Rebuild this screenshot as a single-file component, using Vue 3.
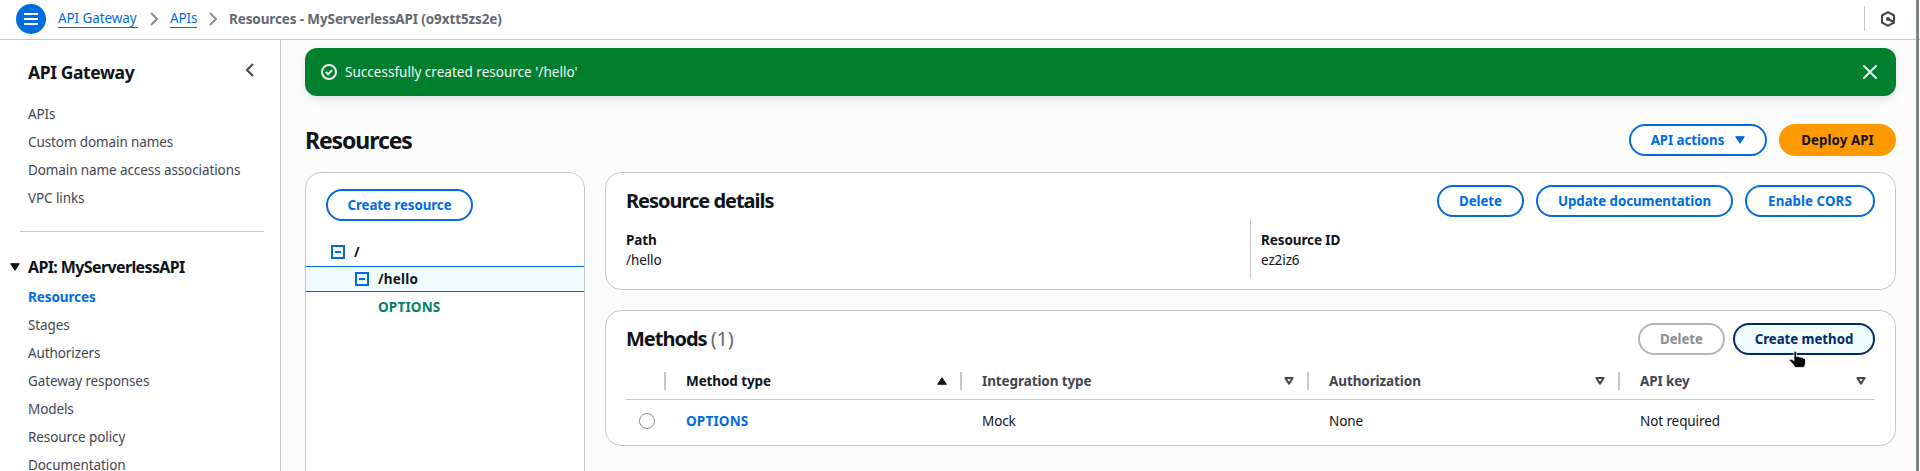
<script setup>
const topLinks = ['APIs', 'Custom domain names', 'Domain name access associations', 'VPC links']
const apiLinks = ['Resources', 'Stages', 'Authorizers', 'Gateway responses', 'Models', 'Resource policy', 'Documentation']
const columns = [
  { label: 'Method type', sorted: true },
  { label: 'Integration type' },
  { label: 'Authorization' },
  { label: 'API key' },
]
</script>

<template>
  <div class="page">
    <header class="topbar">
      <button class="menu" aria-label="Menu">
        <svg width="14" height="14" viewBox="0 0 14 14"><path d="M0 2h14M0 7h14M0 12h14" stroke="#fff" stroke-width="2" /></svg>
      </button>
      <nav class="crumbs">
        <a class="crumb c1">API Gateway</a>
        <svg class="sep" width="8" height="14" viewBox="0 0 8 14"><path d="M1 1l6 6-6 6" /></svg>
        <a class="crumb c2">APIs</a>
        <svg class="sep" width="8" height="14" viewBox="0 0 8 14"><path d="M1 1l6 6-6 6" /></svg>
        <span class="here">Resources - MyServerlessAPI (o9xtt5zs2e)</span>
      </nav>
      <div class="tools">
        <svg width="16" height="16" viewBox="0 0 16 16">
          <path d="M8 1.2l6 3.3v7l-6 3.3-6-3.3v-7z" fill="none" stroke="#424650" stroke-width="2" stroke-linejoin="round" />
          <path d="M8 8l6 3" stroke="#424650" stroke-width="2" /><circle cx="8" cy="8" r="2" fill="#424650" />
        </svg>
      </div>
    </header>

    <div class="body">
      <aside class="side">
        <div class="side-head">
          <h2>API Gateway</h2>
          <svg width="8" height="14" viewBox="0 0 8 14"><path d="M7 1L1 7l6 6" fill="none" stroke="#424650" stroke-width="2" /></svg>
        </div>
        <ul class="links">
          <li v-for="l in topLinks" :key="l">{{ l }}</li>
        </ul>
        <hr />
        <div class="group">
          <svg width="10" height="8" viewBox="0 0 10 8"><path d="M.7.7h8.6L5 7.3z" fill="#0f141a" stroke="#0f141a" stroke-linejoin="round" /></svg>
          <h3>API: MyServerlessAPI</h3>
        </div>
        <ul class="links api">
          <li v-for="(l, i) in apiLinks" :key="l" :class="{ active: i === 0 }">{{ l }}</li>
        </ul>
      </aside>

      <main class="main">
        <div class="flash">
          <svg width="16" height="16" viewBox="0 0 16 16" fill="none" stroke="#ebebf0" stroke-width="2"><circle cx="8" cy="8" r="7" /><path d="M4.8 8l2.3 2.3 4-4.2" /></svg>
          <span>Successfully created resource '/hello'</span>
          <svg class="close" width="14" height="14" viewBox="0 0 14 14"><path d="M1 1l12 12M13 1L1 13" stroke="#ebebf0" stroke-width="2" stroke-linecap="round" /></svg>
        </div>

        <div class="title-row">
          <h1>Resources</h1>
          <button class="btn w-actions">API actions
            <svg width="10" height="8" viewBox="0 0 10 8"><path d="M.7.7h8.6L5 7.3z" fill="#006ce0" stroke="#006ce0" stroke-linejoin="round" /></svg>
          </button>
          <button class="btn primary w-deploy">Deploy API</button>
        </div>

        <div class="columns">
          <section class="card tree">
            <button class="btn w-create">Create resource</button>
            <div class="nodes">
              <div class="node root">
                <svg width="14" height="14" viewBox="0 0 14 14"><path d="M1 1h12v12H1zM4 7h6" /></svg><span>/</span>
              </div>
              <div class="node selected">
                <svg width="14" height="14" viewBox="0 0 14 14"><path d="M1 1h12v12H1zM4 7h6" /></svg><span>/hello</span>
              </div>
              <div class="node method">OPTIONS</div>
            </div>
          </section>

          <div class="stack">
            <section class="card details">
              <div class="card-head">
                <h2 class="t-details">Resource details</h2>
                <button class="btn w-delete">Delete</button>
                <button class="btn w-update">Update documentation</button>
                <button class="btn w-cors">Enable CORS</button>
              </div>
              <dl class="pairs">
                <div><dt>Path</dt><dd>/hello</dd></div>
                <div><dt>Resource ID</dt><dd>ez2iz6</dd></div>
              </dl>
            </section>

            <section class="card methods">
              <div class="card-head">
                <h2>Methods <span>(1)</span></h2>
                <button class="btn disabled w-delete">Delete</button>
                <div class="hovered">
                  <button class="btn hover w-method">Create method</button>
                  <svg class="pointer" width="18" height="18" viewBox="0 0 18 18">
                    <path d="M5 1.4C5 0 7.4 0 7.4 1.4v4.4c.6-.8 2.3-.6 2.6.4.7-.6 2.2-.3 2.5.6.7-.5 2-.2 2.2.7.8-.2 1.8.2 1.8 1.2v3.2c0 1.8-1 2.6-1.3 4.5H5.9c-.8-2-2.4-3.4-3.6-4.9C1.200 10.300 0 9.800.6 8.800c.8-1 2.900-.5 4.400.9z" fill="#000" stroke="#fff" stroke-width=".8" />
                  </svg>
                </div>
              </div>
              <div class="grid head">
                <div class="cell pick"></div>
                <div v-for="c in columns" :key="c.label" class="cell" :class="{ sorted: c.sorted }">
                  <span>{{ c.label }}</span>
                  <svg width="10" height="8" viewBox="0 0 10 8">
                    <path v-if="c.sorted" d="M.7 7.3h8.6L5 .7z" fill="#0f141a" stroke="#0f141a" stroke-linejoin="round" />
                    <path v-else d="M1.4 1h7.2L5 6.6z" fill="none" stroke="#424650" stroke-width="2" stroke-linejoin="round" />
                  </svg>
                </div>
              </div>
              <div class="grid row">
                <div class="cell pick"><i class="radio"></i></div>
                <div class="cell link">OPTIONS</div>
                <div class="cell">Mock</div>
                <div class="cell">None</div>
                <div class="cell">Not required</div>
              </div>
            </section>
          </div>
        </div>
      </main>
    </div>
    <div class="edge"></div>
  </div>
</template>

<style>
body { margin: 0; overflow: hidden; }
</style>

<style scoped>
* { box-sizing: border-box; }
.page {
  position: relative; width: 1920px; height: 471px; overflow: hidden;
  display: flex; flex-direction: column; background: #fcfcfd; color: #0f141a;
  font: 13.5px/20px "Noto Sans", "Open Sans", sans-serif; letter-spacing: -0.1px;
}
h1, h2, h3, ul, dl, dd { margin: 0; padding: 0; }
svg { display: block; flex: none; }
button { font: inherit; letter-spacing: inherit; padding: 0; cursor: pointer; }

.topbar { flex: none; height: 40px; display: flex; align-items: center; padding: 0 24px 2px 16px; background: #fff; border-bottom: 1px solid #c6c6cd; }
.menu { width: 30px; height: 30px; border: 0; border-radius: 50%; background: #006ce0; display: flex; align-items: center; justify-content: center; }
.crumbs { display: flex; align-items: center; margin-left: 12px; }
.crumb { color: #006ce0; line-height: 17px; border-bottom: 1px solid #006ce0; }
.c1 { width: 80px; white-space: nowrap; }
.c2 { width: 27px; }
.sep { margin: 0 12px; fill: none; stroke: #8c8c94; stroke-width: 2; }
.here { color: #656871; font-weight: 700; letter-spacing: -0.12px; }
.tools { margin-left: auto; height: 25px; padding-left: 15px; display: flex; align-items: center; border-left: 1px solid #c6c6cd; }

.body { flex: 1; min-height: 0; display: flex; }
.side { flex: none; width: 281px; background: #fff; border-right: 1px solid #c6c6cd; overflow: hidden; color: #424650; }
.side-head { display: flex; align-items: center; justify-content: space-between; height: 24px; margin: 20px 26px 0 28px; }
.side-head svg { margin-top: -4px; }
.side-head h2 { font-size: 17.5px; letter-spacing: -0.4px; color: #0f141a; }
.links { list-style: none; margin: 16px 0 0 28px; }
.links li { height: 28px; line-height: 28px; white-space: nowrap; }
.side hr { width: 244px; height: 1px; margin: 19px 0 0 20px; border: 0; background: #c6c6cd; }
.group { display: flex; align-items: center; gap: 8px; height: 22px; margin: 24px 0 0 10px; color: #0f141a; }
.group h3 { font-size: 16px; letter-spacing: -0.62px; }
.links.api { margin-top: 5px; }
.links .active { color: #006ce0; font-weight: 700; }

.main { flex: 1; min-width: 0; padding: 8px 24px 0; display: flex; flex-direction: column; }
.flash { flex: none; height: 48px; display: flex; align-items: center; gap: 8px; padding: 0 19px 0 16px; border-radius: 12px; background: #00802f; color: #f5f7f8; letter-spacing: 0.02px; box-shadow: 0 4px 8px rgba(0, 7, 22, .1); }
.close { margin-left: auto; }
.title-row { display: flex; align-items: center; height: 32px; margin-top: 28px; gap: 12px; }
.title-row h1 { margin-right: auto; font-size: 23px; letter-spacing: -1.1px; line-height: 30px; }

.btn { flex: none; height: 32px; border: 2px solid #006ce0; border-radius: 20px; background: #fff; color: #006ce0; font-weight: 700; display: flex; align-items: center; justify-content: center; white-space: nowrap; font-size: 13.3px; letter-spacing: -0.06px; }
.primary { background: #ff9900; border-color: #ff9900; color: #0f141a; }
.disabled { border-color: #b4b4bb; color: #8c8c94; }
.hover { border-color: #002b66; background: #f0fbff; color: #002b66; }
.w-actions { width: 138px; gap: 11px; }
.w-deploy { width: 117px; letter-spacing: 0.08px; }
.w-create { width: 147px; margin: 16px 0 0 20px; }
.w-delete { width: 87px; }
.w-update { width: 197px; }
.w-cors { width: 130px; letter-spacing: 0.1px; }
.w-method { width: 142px; }

.columns { display: flex; gap: 20px; margin-top: 16px; flex: 1; min-height: 0; }
.card { background: #fff; border: 1px solid #c6c6cd; border-radius: 16px; }
.tree { flex: none; width: 280px; height: 400px; }
.nodes { margin-top: 16px; font-weight: 700; letter-spacing: 0.18px; }
.node { display: flex; align-items: center; gap: 9px; }
.node svg { fill: none; stroke: #006ce0; stroke-width: 2; }
.root { height: 29px; padding-left: 25px; }
.selected { height: 26px; padding-left: 49px; background: #f0fbff; border: solid #006ce0; border-width: 1px 0; }
.method { height: 30px; padding-left: 72px; color: #067f68; }
.stack { flex: 1; display: flex; flex-direction: column; gap: 20px; }
.card-head { display: flex; align-items: center; gap: 12px; height: 32px; }
.card-head h2 { margin-right: auto; font-size: 20px; letter-spacing: -1.02px; line-height: 24px; }
.card-head h2 span { color: #656871; font-weight: 400; letter-spacing: -0.2px; }
.details { height: 118px; padding: 12px 20px 0; }
.pairs { display: grid; grid-template-columns: 624px 1fr; height: 60px; margin-top: 2px; }
.pairs > div { padding-top: 11px; }
.pairs > div + div { border-left: 1px solid #c6c6cd; padding-left: 10px; }
.pairs dt { font-weight: 700; }
.methods { height: 136px; padding: 12px 20px 0; }
.methods .card-head { gap: 8px; }
.hovered { position: relative; }
.pointer { position: absolute; left: 56px; top: 28px; }
.grid { display: grid; grid-template-columns: 40px 296px 347px 311px 255px; }
.head { height: 45px; border-bottom: 1px solid #c6c6cd; font-weight: 700; color: #424650; }
.head .cell { height: 18px; margin-top: 17px; border-right: 2px solid #c6c6cd; padding-right: 13px; }
.head .cell:last-child { border-right: 0; padding-right: 9px; }
.cell { display: flex; align-items: center; justify-content: space-between; padding-left: 20px; }
.head .sorted { color: #0f141a; }
.row { height: 41px; }
.cell.pick { padding: 0 0 0 13px; }
.radio { width: 16px; height: 16px; border: 1px solid #8c8c94; border-radius: 50%; }
.link { color: #006ce0; font-weight: 700; letter-spacing: 0.18px; }
.edge { position: absolute; right: 1px; top: 0; width: 3px; height: 471px; background: #7f8584; }
</style>
